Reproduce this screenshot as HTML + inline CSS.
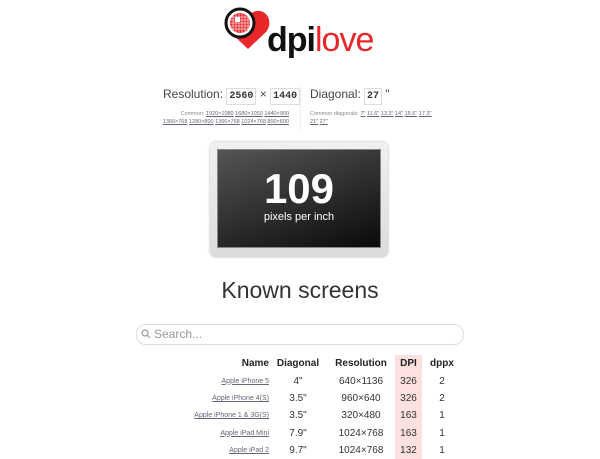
<!DOCTYPE html>
<html><head><style>
body{margin:0;width:600px;height:458px;overflow:hidden;background:#fff;font-family:"Liberation Sans",sans-serif;color:#333;position:relative}
.a{position:absolute}
a{color:#667;text-decoration:underline}
.inp{display:inline-block;border:1px solid #ddd;padding:2px 2px;font-family:"Liberation Mono",monospace;font-weight:bold;font-size:10px;color:#333}
table{position:absolute;left:190px;top:355px;border-collapse:collapse;font-size:10px}
td,th{height:17.4px;padding:0;text-align:center}
th{font-size:10px;color:#222}
td.n{text-align:right;font-size:7px}
td.d,th.d{background:#fde0e0}
</style></head><body>
<svg class="a" style="left:222px;top:5px" width="50" height="48" viewBox="0 0 50 48">
<path d="M26 44 L8 27 C2 20 4 8 14 6 C20 5 24 9 26 12 C28 9 32 5 38 6 C48 8 50 20 44 27 Z" fill="#e8272a"/>
<circle cx="18" cy="18" r="14" fill="#fff" stroke="#111" stroke-width="3"/>
<circle cx="18" cy="18" r="10" fill="#e8272a"/>
<g stroke="#fff" stroke-width="0.7" opacity=".8"><path d="M8 12H28M8 15H28M8 18H28M8 21H28M8 24H28M11 8V28M14 8V28M17 8V28M20 8V28M23 8V28M26 8V28"/></g>
<rect x="13" y="12" width="5" height="5" fill="#fff"/>
</svg>
<div class="a" style="left:267px;top:21px;font-size:34px;line-height:38px;letter-spacing:-1px"><b style="color:#111">dpi</b><span style="color:#e8272a">love</span></div>
<div class="a" style="left:163px;top:87px;font-size:12px;color:#444">Resolution: <span class="inp">2560</span> × <span class="inp">1440</span></div>
<div class="a" style="left:159px;top:110px;width:130px;font-size:5.5px;line-height:8px;text-align:right;color:#888">Common: <a>1920×1080</a> <a>1680×1050</a> <a>1440×900</a> <a>1366×768</a> <a>1280×800</a> <a>1366×768</a> <a>1024×768</a> <a>800×600</a></div>
<div class="a" style="left:300px;top:86px;width:1px;height:44px;background:#eee"></div>
<div class="a" style="left:310px;top:87px;font-size:12px;color:#444">Diagonal: <span class="inp">27</span> "</div>
<div class="a" style="left:310px;top:110px;width:130px;font-size:5.5px;line-height:8px;color:#888">Common diagonals: <a>7"</a> <a>11.6"</a> <a>13.3"</a> <a>14"</a> <a>15.6"</a> <a>17.3"</a> <a>21"</a> <a>27"</a></div>
<div class="a" style="left:210px;top:142px;width:178px;height:115px;border-radius:6px;background:linear-gradient(#f0f0f0,#dcdcdc);box-shadow:0 0 2px #aaa"></div>
<div class="a" style="left:217px;top:149px;width:164px;height:99px;background:linear-gradient(160deg,#555,#0a0a0a);border:1px solid #888;box-sizing:border-box;color:#fff;text-align:center">
<div style="font-size:42px;font-weight:bold;line-height:42px;margin-top:18px">109</div>
<div style="font-size:11px;margin-top:1px">pixels per inch</div></div>
<div class="a" style="left:0;width:600px;top:277px;text-align:center;font-size:23px;color:#333">Known screens</div>
<div class="a" style="left:136px;top:324px;width:326px;height:19px;border:1px solid #ddd;border-radius:10px"></div>
<svg class="a" style="left:141px;top:329px" width="10" height="10"><circle cx="4" cy="4" r="3" fill="none" stroke="#999" stroke-width="1.2"/><path d="M6 6L9 9" stroke="#999" stroke-width="1.2"/></svg>
<div class="a" style="left:154px;top:327px;font-size:12px;color:#999">Search...</div>
<table>
<tr><th style="width:79px;text-align:right">Name</th><th style="width:58px">Diagonal</th><th style="width:68px">Resolution</th><th class="d" style="width:27px">DPI</th><th style="width:40px">dppx</th></tr>
<tr><td class="n"><a>Apple iPhone 5</a></td><td>4"</td><td>640×1136</td><td class="d">326</td><td>2</td></tr>
<tr><td class="n"><a>Apple iPhone 4(S)</a></td><td>3.5"</td><td>960×640</td><td class="d">326</td><td>2</td></tr>
<tr><td class="n"><a>Apple iPhone 1 &amp; 3G(S)</a></td><td>3.5"</td><td>320×480</td><td class="d">163</td><td>1</td></tr>
<tr><td class="n"><a>Apple iPad Mini</a></td><td>7.9"</td><td>1024×768</td><td class="d">163</td><td>1</td></tr>
<tr><td class="n"><a>Apple iPad 2</a></td><td>9.7"</td><td>1024×768</td><td class="d">132</td><td>1</td></tr>
</table>
</body></html>
